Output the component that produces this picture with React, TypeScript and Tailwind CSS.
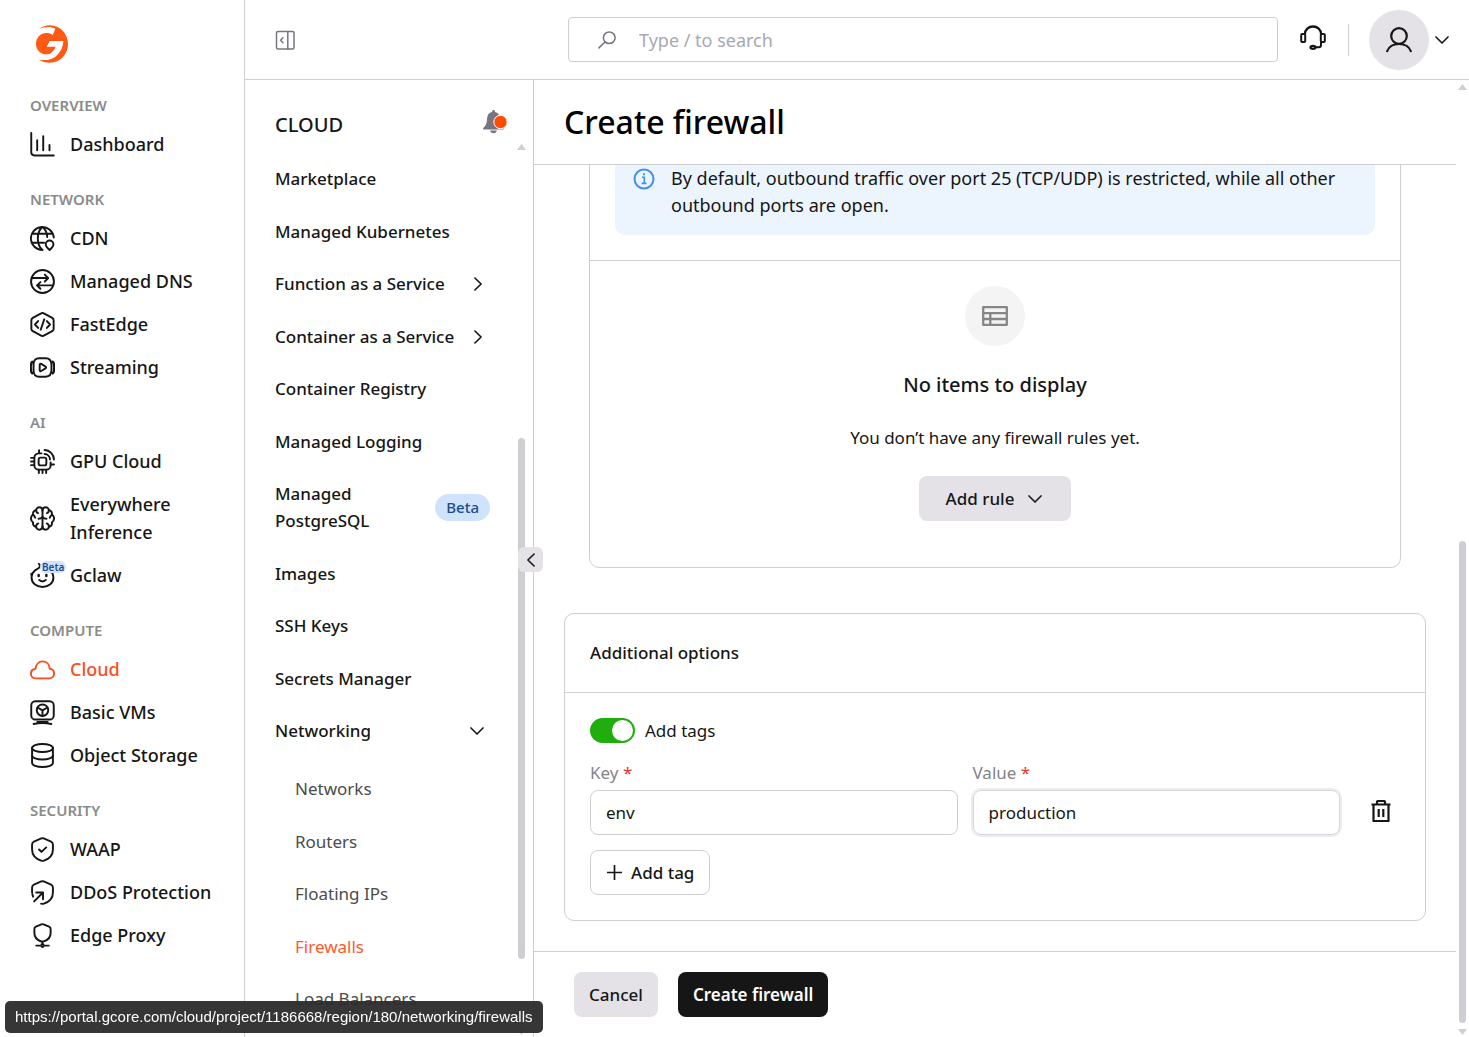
import React, { useState } from 'react';

type IconProps = { className?: string; children?: React.ReactNode };

const Glyph: React.FC<IconProps> = ({ className = 'size-6', children }) => (
  <svg
    className={`shrink-0 ${className}`}
    viewBox="0 0 24 24"
    fill="none"
    stroke="currentColor"
    strokeWidth="1.85"
    strokeLinecap="round"
    strokeLinejoin="round"
    aria-hidden="true"
  >
    {children}
  </svg>
);

const icons: Record<string, React.ReactNode> = {
  dashboard: (
    <path d="M1.200 1v18.500a3 3 0 0 0 3 3H22.800M6.900 8v9.500M12.700 4v13.500M18.700 12.500v5" />
  ),
  cdn: (
    <>
      <path d="M22.800 11A11 11 0 1 0 12 23M12 1C9.500 3 7.500 7 7.500 12s2 9 4.500 11M12 1c2.500 2 4.300 5.500 4.500 9.500M2.500 7.500h19M1.500 16h12" />
      <path d="M18.800 23c-2.400-2.200-3.700-3.500-3.700-5.300a3.700 3.700 0 0 1 7.400 0c0 1.800-1.300 3.100-3.700 5.300Z" />
    </>
  ),
  dns: (
    <>
      <circle cx="12" cy="12" r="11" />
      <path d="M2.500 8.700H17.500M14.200 5.400l3.300 3.300-3.300 3.300M21.500 15.700H6.700M10 12.600l-3.300 3.100L10 19" />
    </>
  ),
  fastedge: (
    <>
      <path d="M10.700 1.300a2.600 2.600 0 0 1 2.600 0l8 4.300a2.600 2.600 0 0 1 1.400 2.300v8.200a2.600 2.600 0 0 1-1.400 2.300l-8 4.300a2.600 2.600 0 0 1-2.600 0l-8-4.300a2.600 2.600 0 0 1-1.400-2.300V7.900a2.600 2.600 0 0 1 1.400-2.300Z" />
      <path d="M7.800 8.700 4.800 12l3 3.300M16.200 8.700l3 3.300-3 3.300M13.700 7l-3.400 10" />
    </>
  ),
  streaming: (
    <>
      <path d="M3.400 9.500c0-4.300 1.700-6.300 5.600-6.300h6c3.900 0 5.600 2 5.600 6.300v5c0 4.300-1.700 6.300-5.600 6.300H9c-3.900 0-5.600-2-5.600-6.300Z" />
      <path d="M2.200 6.500C.9 7.500.7 9 .7 12s.2 4.500 1.500 5.500M21.800 6.500c1.300 1 1.500 2.500 1.500 5.500s-.2 4.500-1.500 5.500" strokeWidth="2.200" />
      <path d="M9.300 9.400c0-1 .7-1.300 1.500-.9l4 2.500c.8.500.8 1.400 0 1.900l-4 2.500c-.8.500-1.500.1-1.500-.8Z" />
    </>
  ),
  gpu: (
    <>
      <path d="M11 4.200H8.200a4 4 0 0 0-4 4v7.600a4 4 0 0 0 4 4h7.600a4 4 0 0 0 4-4V13" />
      <rect x="8.300" y="8.300" width="7.400" height="7.400" rx="1.800" />
      <path d="M8.700 4V1.200M4 8.500H1M4 12H1M4 15.500H1M8.500 20v3M12 20v3M15.500 20v3M20 14.800h3" />
      <path d="M14 4.800a5.500 5.500 0 0 1 5.200 5.200M14 1a9.300 9.300 0 0 1 9 9" />
    </>
  ),
  brain: (
    <>
      <path d="M12 4.500C12 2.500 10.700 1.200 9 1.200S5.900 2.500 5.900 4C3.800 4.200 2.500 6 3 8.200 1.500 9.200.9 10.600.9 12s.6 2.800 2.100 3.800c-.5 2.200.8 4 2.900 4.200 0 1.500 1.400 2.800 3.100 2.800s3-1.300 3-3.300Z" />
      <path d="M12 4.500c0-2 1.300-3.300 3-3.300s3.100 1.300 3.100 2.800c2.100.2 3.400 2 2.900 4.200 1.500 1 2.100 2.400 2.100 3.800s-.6 2.800-2.100 3.800c.5 2.200-.8 4-2.900 4.200 0 1.500-1.400 2.800-3.100 2.800s-3-1.300-3-3.300" />
      <path d="M5.900 4c0 1.400.6 2.300 1.800 2.800M18.100 4c0 1.400-.6 2.300-1.800 2.800M3 8.300c1 .8 1.800 1.800 2 3M21 8.300c-1 .8-1.800 1.800-2 3M12 10.500c-1 1.300-2.200 1.800-3.800 1.800M12 10.500c1 1.300 2.200 1.800 3.800 1.800M5.900 20c-.1-1.700.6-2.800 2-3.300M18.100 20c.1-1.700-.6-2.800-2-3.300" />
    </>
  ),
  gclaw: (
    <>
      <path d="M8.500.8c1.500 1.400 1.600 3-.8 4.500C4 7 1.500 9.700 1.500 14c0 5.300 4.500 9 10.500 9s10.500-3.700 10.500-9c0-1.500-.4-2.800-1-4" />
      <path d="M1.500 10.500v.5M8.300 11.500v1M15.700 11.500v1" strokeWidth="2.400" />
      <path d="M8.800 16.300c1.600 1.900 4.800 1.900 6.400 0" />
    </>
  ),
  cloud: (
    <path d="M5.700 20.500C2.800 20.500.9 18.500.9 16c0-2.600 1.900-4.400 4.400-4.500.3-4.200 3-7.300 6.800-7.300s6.500 2.900 6.800 7c2.500.1 4.200 2.100 4.200 4.600 0 2.600-1.900 4.700-4.700 4.700Z" />
  ),
  vms: (
    <>
      <rect x="1.200" y="1.200" width="21.600" height="17.600" rx="4" />
      <circle cx="12" cy="9.800" r="5.500" />
      <path d="M7.300 7.200 12 10l4.700-2.800M12 10v5" />
      <path d="M7 21h10M3.500 23c5-1 12-1 17 0" />
    </>
  ),
  storage: (
    <>
      <ellipse cx="12" cy="4.800" rx="10" ry="3.800" />
      <path d="M2 4.800v14.400C2 21.300 6.500 23 12 23s10-1.700 10-3.800V4.800" />
      <path d="M2 12c0 2.100 4.500 3.800 10 3.800s10-1.700 10-3.800" />
    </>
  ),
  waap: (
    <>
      <path d="M10.800 1.400a3 3 0 0 1 2.400 0l7 3A3 3 0 0 1 22 7.200V12c0 5.500-3.900 9.100-8.700 10.700a4 4 0 0 1-2.600 0C5.900 21.100 2 17.500 2 12V7.200a3 3 0 0 1 1.800-2.800Z" />
      <path d="m8.700 12 2.300 2.300 4.600-4.300" />
    </>
  ),
  ddos: (
    <>
      <path d="M2 12V7.200a3 3 0 0 1 1.800-2.800l7-3a3 3 0 0 1 2.400 0l7 3A3 3 0 0 1 22 7.200V12c0 5.500-3.900 9.100-8.700 10.700a4 4 0 0 1-2.600 0" />
      <path d="M4 20.500 12 12.500M6 12h6.500v6.500" />
      <path d="M2.200 13.500 3 16" />
    </>
  ),
  proxy: (
    <>
      <path d="M11 1.300a2.500 2.500 0 0 1 2 0l5.300 2.200A2.500 2.500 0 0 1 19.800 5.800V9.500c0 4.200-2.800 6.700-6 8a5 5 0 0 1-3.600 0c-3.200-1.300-6-3.800-6-8V5.800a2.500 2.500 0 0 1 1.500-2.300Z" />
      <path d="M12 18v2.500M6 21.700h3.500M14.500 21.700H18" />
      <circle cx="12" cy="21.700" r="1.300" />
    </>
  ),
};

const ChevronDown: React.FC = () => (
  <svg className="h-2 w-3.5 shrink-0" viewBox="0 0 14 8" fill="none" stroke="currentColor" strokeWidth="1.5" strokeLinecap="round" strokeLinejoin="round" aria-hidden="true">
    <path d="m1 .9 6 6.200 6-6.200" />
  </svg>
);

const ChevronRight: React.FC = () => (
  <svg className="h-3.5 w-2 shrink-0" viewBox="0 0 8 14" fill="none" stroke="currentColor" strokeWidth="1.6" strokeLinecap="round" strokeLinejoin="round" aria-hidden="true">
    <path d="m.9 1 6.200 6-6.200 6" />
  </svg>
);

type NavItem = { label: string; icon: string; active?: boolean; beta?: boolean; wrap?: boolean };

const sections: { title: string; items: NavItem[] }[] = [
  { title: 'OVERVIEW', items: [{ label: 'Dashboard', icon: 'dashboard' }] },
  {
    title: 'NETWORK',
    items: [
      { label: 'CDN', icon: 'cdn' },
      { label: 'Managed DNS', icon: 'dns' },
      { label: 'FastEdge', icon: 'fastedge' },
      { label: 'Streaming', icon: 'streaming' },
    ],
  },
  {
    title: 'AI',
    items: [
      { label: 'GPU Cloud', icon: 'gpu' },
      { label: 'Everywhere Inference', icon: 'brain', wrap: true },
      { label: 'Gclaw', icon: 'gclaw', beta: true },
    ],
  },
  {
    title: 'COMPUTE',
    items: [
      { label: 'Cloud', icon: 'cloud', active: true },
      { label: 'Basic VMs', icon: 'vms' },
      { label: 'Object Storage', icon: 'storage' },
    ],
  },
  {
    title: 'SECURITY',
    items: [
      { label: 'WAAP', icon: 'waap' },
      { label: 'DDoS Protection', icon: 'ddos' },
      { label: 'Edge Proxy', icon: 'proxy' },
    ],
  },
];

const cloudItems: { label: string; more?: boolean; beta?: boolean }[] = [
  { label: 'Marketplace' },
  { label: 'Managed Kubernetes' },
  { label: 'Function as a Service', more: true },
  { label: 'Container as a Service', more: true },
  { label: 'Container Registry' },
  { label: 'Managed Logging' },
  { label: 'Managed PostgreSQL', beta: true },
  { label: 'Images' },
  { label: 'SSH Keys' },
  { label: 'Secrets Manager' },
];

const networkingItems = ['Networks', 'Routers', 'Floating IPs', 'Firewalls', 'Load Balancers'];

const Scrollbar: React.FC<{ offset: number; size: number }> = ({ offset, size }) => (
  <div className="flex w-[13px] shrink-0 flex-col items-center text-[#cfced3]" aria-hidden="true">
    <svg className="h-3.5 w-[9px]" viewBox="0 0 9 14" fill="currentColor">
      <path d="M4.500 4 9 10H0Z" />
    </svg>
    <div className="relative w-[7px] flex-1">
      <div
        className="absolute w-full rounded-full bg-[#cfced3]"
        style={{ top: `${offset}%`, height: `${size}%` }}
      />
    </div>
    <svg className="h-3.5 w-[9px]" viewBox="0 0 9 14" fill="currentColor">
      <path d="M4.500 12 0 6h9Z" />
    </svg>
  </div>
);

const MainNav: React.FC = () => (
  <aside className="flex w-[245px] shrink-0 flex-col border-r border-[#cfced3] pl-[30px]">
    <a href="#home" aria-label="Home" className="mt-[25px] mb-8 ml-[5px] block size-[38px]">
      <svg className="size-full" viewBox="105 75 114 114" fill="#ff5913" aria-hidden="true">
        <path d="M117 87c10-7 21-11 33-11 30 0 54 25 54 56s-24 56-54 56c-12 0-23-3-33-9 22 3 36 1 49-9 14-11 23-27 24-47h-41l-9 17h27c-6 14-16 23-29 23-17 0-30-14-30-32s14-32 31-32c8 0 14 2 19 6l8-19c-14-7-31-6-49 1Z" />
      </svg>
    </a>
    <nav className="flex flex-col gap-[31px]">
      {sections.map((section) => (
        <section key={section.title}>
          <h2 className="mb-[15px] text-[15px] leading-5 font-semibold text-[#8b8b8b]">{section.title}</h2>
          <ul className="flex flex-col gap-[15px]">
            {section.items.map((item) => (
              <li key={item.label}>
                <a
                  href={`#${item.icon}`}
                  className={`flex items-center gap-[15px] text-[18px] leading-7 font-medium ${item.active ? 'text-[#ff4c1e]' : 'text-[#161616]'}`}
                >
                  <span className="relative">
                    <Glyph className="size-[25px]">{icons[item.icon]}</Glyph>
                    {item.beta && (
                      <span className="absolute -top-0.5 left-2.5 rounded-full bg-[#cfe3fd] px-0.5 text-[10px] leading-3 font-semibold text-[#1d4b8f]">
                        Beta
                      </span>
                    )}
                  </span>
                  <span className={item.wrap ? 'w-32' : ''}>{item.label}</span>
                </a>
              </li>
            ))}
          </ul>
        </section>
      ))}
    </nav>
  </aside>
);

const CloudNav: React.FC = () => (
  <aside className="relative flex w-[289px] shrink-0 flex-col border-r border-[#cfced3]">
    <div className="flex h-[60px] shrink-0 items-end justify-between pr-[25px] pl-[30px]">
      <h2 className="text-[20px] leading-[30px] font-medium">CLOUD</h2>
      <button type="button" aria-label="Notifications" className="mb-1.5 text-[#77757f]">
        <svg className="h-6 w-[26px]" viewBox="0 0 26 24" fill="currentColor" aria-hidden="true">
          <path d="M11.500 0c.9 0 1.400.6 1.400 1.500v.6c3.400.7 4.900 3.200 5 6.400.1 4.500.9 7 3.700 9.600v1.400H1.200v-1.400C4 15.500 5 13 5.100 8.500c.1-3.200 1.600-5.700 5-6.400v-.6c0-.9.500-1.500 1.400-1.500ZM8.200 20.500h6.600c-.2 1.700-1.500 2.800-3.300 2.800s-3.100-1.100-3.300-2.800Z" />
          <circle cx="18.500" cy="12" r="6.700" fill="#ff4c00" stroke="#fff" strokeWidth="1" />
        </svg>
      </button>
    </div>
    <div className="flex min-h-0 flex-1">
      <nav className="min-w-0 flex-1 overflow-hidden pt-3 pl-[30px]">
        <ul className="text-[17px] leading-[27px] font-medium">
          {cloudItems.map((item) => (
            <li key={item.label} className="py-[13px] pr-[25px] even:pb-3">
              <a href="#service" className="flex items-center justify-between">
                <span className={item.beta ? 'w-28' : ''}>{item.label}</span>
                {item.more && <span className="mr-2"><ChevronRight /></span>}
                {item.beta && (
                  <span className="rounded-full bg-[#cfe3fd] px-[11px] text-[15px] leading-[27px] text-[#1d4b8f]">Beta</span>
                )}
              </a>
            </li>
          ))}
          <li className="pt-[13px] pr-[31px]">
            <button type="button" className="flex w-full items-center justify-between" aria-expanded="true">
              Networking
              <ChevronDown />
            </button>
            <ul className="mt-[18px] pl-5 font-normal text-[#4b4b4b]">
              {networkingItems.map((label) => (
                <li key={label} className="py-[13px] even:pb-3">
                  <a href="#networking" className={label === 'Firewalls' ? 'text-[#ff5a2c]' : ''}>{label}</a>
                </li>
              ))}
            </ul>
          </li>
        </ul>
      </nav>
      <Scrollbar offset={32.7} size={59.9} />
      <div className="w-[5px]" />
    </div>
    <button
      type="button"
      aria-label="Collapse menu"
      className="absolute top-[467px] -right-[10px] z-10 flex size-[25px] items-center justify-center rounded-md bg-[#e4e2e6]"
    >
      <span className="rotate-180"><ChevronRight /></span>
    </button>
  </aside>
);

const TopBar: React.FC = () => (
  <header className="flex h-20 shrink-0 items-center border-b border-[#cfced3] pr-5 pl-[30px]">
    <button type="button" aria-label="Toggle sidebar" className="text-[#77757f]">
      <svg className="size-5" viewBox="0 0 20 20" fill="none" stroke="currentColor" strokeWidth="1.5" strokeLinecap="round" strokeLinejoin="round" aria-hidden="true">
        <rect x="1.500" y="1.500" width="17.500" height="17.500" rx="1.500" />
        <path d="M12.800 1.500V19M8 7.800 5.500 10.300 8 12.800" />
      </svg>
    </button>
    <div className="ml-auto flex h-[45px] w-full max-w-[710px] items-center gap-[23px] rounded border border-[#cfced3] px-[29px]">
      <svg className="size-[18px]" viewBox="0 0 20 20" fill="none" stroke="#77757f" strokeWidth="1.700" strokeLinecap="round" aria-hidden="true">
        <circle cx="12.500" cy="7.500" r="6.500" />
        <path d="M7.800 12.200 1 18.800" />
      </svg>
      <input
        type="search"
        aria-label="Search"
        placeholder="Type / to search"
        className="min-w-0 flex-1 text-[18px] leading-7 outline-none placeholder:text-[#a9a8b0]"
      />
    </div>
    <button type="button" aria-label="Support" className="ml-[22px]">
      <svg className="size-[26px]" viewBox="0 2 26 26" fill="none" stroke="currentColor" strokeWidth="2" strokeLinejoin="round" aria-hidden="true" overflow="visible">
        <path d="M5 9C5 4.500 8.500 1.500 13 1.500S21 4.500 21 9" strokeWidth="2.400" />
        <rect x="1.200" y="9" width="4" height="8" rx="1" />
        <rect x="20.800" y="9" width="4" height="8" rx="1" />
        <path d="M21 17v3c0 1.500-.8 2.300-2.300 2.300h-3.200" />
        <ellipse cx="13" cy="22.300" rx="2.500" ry="1.500" strokeWidth="2.200" />
      </svg>
    </button>
    <div className="ml-[22px] h-8 w-px shrink-0 bg-[#cfced3]" />
    <button type="button" aria-label="Account" className="ml-5 flex items-center gap-1.5">
      <span className="flex size-[60px] items-center justify-center rounded-full bg-[#e4e2e6]">
        <svg className="size-[26px]" viewBox="0 0 26 26" fill="none" stroke="currentColor" strokeWidth="2.200" strokeLinecap="round" aria-hidden="true">
          <circle cx="13" cy="9" r="7.800" />
          <path d="M1.200 24.200c1.800-4.800 6.200-7.200 11.800-7.200s10 2.400 11.800 7.200" />
        </svg>
      </span>
      <ChevronDown />
    </button>
  </header>
);

const RulesCard: React.FC = () => (
  <section className="mx-[25px] shrink-0 rounded-[10px] border border-[#cfced3]">
    <div className="border-b border-[#cfced3] p-[25px]">
      <div className="flex items-start gap-4 rounded-[10px] bg-[#ecf4fd] py-4 pr-7 pl-[18px]">
        <svg className="mt-[3px] size-[22px] shrink-0" viewBox="0 0 22 22" fill="none" stroke="#3f8ff7" strokeWidth="2" aria-hidden="true">
          <circle cx="11" cy="11" r="9.500" />
          <path d="M9 9.300h2.300v6M8.700 15.400h4.800" strokeWidth="1.600" />
          <path d="M10 6.300h1.900" />
        </svg>
        <p className="text-[18px] leading-[27px]">
          By default, outbound traffic over port 25 (TCP/UDP) is restricted, while all other outbound ports are open.
        </p>
      </div>
    </div>
    <div className="flex flex-col items-center gap-6 pt-[25px] pb-[46px]">
      <span className="flex size-[60px] items-center justify-center rounded-full bg-[#f4f4f4] text-[#868686]">
        <svg className="h-5 w-[26px]" viewBox="0 0 26 20" fill="none" stroke="currentColor" strokeWidth="2.300" strokeLinejoin="round" aria-hidden="true">
          <path d="M1.200 1.200h23.600v17.600H1.200ZM1 7.200h24M1 13h24M8.300 7.200V19" />
        </svg>
      </span>
      <h3 className="text-[20px] leading-[30px] font-medium">No items to display</h3>
      <p className="text-[17px] leading-7">You don’t have any firewall rules yet.</p>
      <button type="button" className="flex h-[45px] items-center gap-3.5 rounded-lg bg-[#e4e2e6] pr-[29px] pl-[27px] text-[17px] font-medium">
        Add rule
        <ChevronDown />
      </button>
    </div>
  </section>
);

const OptionsCard: React.FC = () => {
  const [tagsEnabled, setTagsEnabled] = useState(true);
  const [tag, setTag] = useState({ key: 'env', value: 'production' });

  return (
    <section className="shrink-0 rounded-[10px] border border-[#cfced3] text-[17px] leading-[27px]">
      <h3 className="border-b border-[#cfced3] px-[25px] pt-[25px] pb-[26px] font-medium">Additional options</h3>
      <div className="p-[25px]">
        <label className="flex h-[25px] items-center gap-2.5">
          <input
            type="checkbox"
            role="switch"
            checked={tagsEnabled}
            onChange={(e) => setTagsEnabled(e.target.checked)}
            className="flex h-[25px] w-[45px] appearance-none items-center rounded-full bg-[#cfced3] px-0.5 before:size-[21px] before:rounded-full before:bg-white checked:justify-end checked:bg-[#1fae0c]"
          />
          Add tags
        </label>
        <div className="mt-4 flex items-end">
          <div className="min-w-0 flex-1">
            <label htmlFor="tag-key" className="mb-1 block text-[#85838c]">
              Key <span className="text-[#e5352b]">*</span>
            </label>
            <input
              id="tag-key"
              value={tag.key}
              onChange={(e) => setTag({ ...tag, key: e.target.value })}
              className="block h-[45px] w-full rounded-lg border border-[#cfced3] px-[15px] outline-none"
            />
          </div>
          <div className="ml-[15px] min-w-0 flex-1">
            <label htmlFor="tag-value" className="mb-1 block text-[#85838c]">
              Value <span className="text-[#e5352b]">*</span>
            </label>
            <input
              id="tag-value"
              value={tag.value}
              onChange={(e) => setTag({ ...tag, value: e.target.value })}
              className="block h-[45px] w-full rounded-lg border border-[#d6d5dc] px-[15px] ring-2 ring-[#ececf1] outline-none"
            />
          </div>
          <button type="button" aria-label="Delete tag" className="ml-[22px] flex h-12 w-[38px] items-center justify-center">
            <svg className="h-[22px] w-5" viewBox="0 0 20 22" fill="none" stroke="currentColor" strokeWidth="2.200" strokeLinejoin="round" aria-hidden="true">
              <path d="M.5 4.500h19M2.500 4.500V21h15V4.500M6 4.500V2.200c0-.7.400-1.200 1.200-1.200h5.600c.8 0 1.200.5 1.200 1.200v2.300M7.700 9v8M12.300 9v8" />
            </svg>
          </button>
        </div>
        <button type="button" className="mt-[15px] flex h-[45px] items-center gap-2 rounded-lg border border-[#cfced3] px-[15px] font-medium">
          <svg className="size-[17px]" viewBox="0 0 17 17" fill="none" stroke="currentColor" strokeWidth="1.700" aria-hidden="true">
            <path d="M8.500 1v15M1 8.500h15" />
          </svg>
          Add tag
        </button>
      </div>
    </section>
  );
};

const App: React.FC = () => {
  return (
    <div className="flex h-screen overflow-hidden bg-white font-['Noto_Sans',sans-serif] text-[#161616]">
      <MainNav />
      <div className="flex min-w-0 flex-1 flex-col">
        <TopBar />
        <div className="flex min-h-0 flex-1">
          <CloudNav />
          <main className="flex min-w-0 flex-1 flex-col">
            <div className="z-10 flex h-[85px] shrink-0 items-center border-b border-[#cfced3] bg-white px-[30px]">
              <h1 className="text-[32px] leading-10 font-medium text-black">Create firewall</h1>
            </div>
            <div className="flex min-h-0 flex-1 flex-col justify-end gap-[45px] overflow-hidden px-[30px] pb-[30px]">
              <RulesCard />
              <OptionsCard />
            </div>
            <div className="flex h-[86px] shrink-0 items-center gap-5 border-t border-[#cfced3] px-10 text-[17px] font-medium">
              <button type="button" className="h-[45px] rounded-lg bg-[#e4e2e6] px-[15px]">Cancel</button>
              <button type="button" className="h-[45px] rounded-lg bg-[#161616] px-[15px] font-semibold text-white">Create firewall</button>
            </div>
          </main>
          <Scrollbar offset={48.1} size={51.9} />
        </div>
      </div>
      <div className="fixed bottom-1 left-[5px] z-20 rounded-[5px] bg-[#2b2b2b]/95 px-2.5 py-1 font-['Liberation_Sans',sans-serif] text-[15px] leading-6 text-white">
        https://portal.gcore.com/cloud/project/1186668/region/180/networking/firewalls
      </div>
    </div>
  );
};

export default App;
